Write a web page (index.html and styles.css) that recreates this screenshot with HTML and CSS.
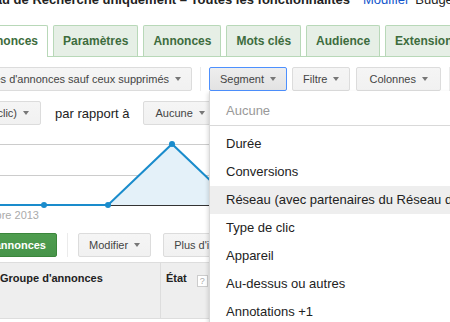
FILE: index.html
```html
<!DOCTYPE html>
<html lang="fr">
<head>
  <meta charset="UTF-8">
  <title>Groupes d'annonces</title>
  <link rel="stylesheet" href="styles.css">
</head>
<body>
  <div class="page">
    <div class="title">
      <div class="title-main"><span>Type : Réseau de Recherche uniquement – Toutes les fonctionnalités</span></div>
      <a href="#" class="link">Modifier</a>
      <span class="budget">Budget : 10,00 €/jour</span>
    </div>

    <div class="tabs">
      <div class="lead tab-lead"><span class="tab active">Groupes d'annonces</span></div>
      <span class="tab">Paramètres</span>
      <span class="tab">Annonces</span>
      <span class="tab">Mots clés</span>
      <span class="tab">Audience</span>
      <span class="tab">Extensions d'annonces</span>
    </div>

    <div class="toolbar toolbar-view">
      <div class="lead lead-status"><span class="btn">Tous les groupes d'annonces sauf ceux supprimés <i class="caret"></i></span></div>
      <span class="sep"></span>
      <span class="btn pressed">Segment <i class="caret"></i></span>
      <span class="btn">Filtre <i class="caret"></i></span>
      <span class="btn btn-wide">Colonnes <i class="caret"></i></span>
      <span class="sep"></span>
    </div>

    <div class="toolbar">
      <div class="lead lead-metric"><span class="btn">CPC moy. (coût par clic) <i class="caret"></i></span></div>
      <span class="compare">par rapport à</span>
      <span class="btn">Aucune <i class="caret"></i></span>
    </div>

    <svg class="chart" width="450" height="100" viewBox="0 0 450 100">
      <line x1="0" y1="19.5" x2="260" y2="19.5" stroke="#cccccc"/>
      <line x1="0" y1="50.5" x2="260" y2="50.5" stroke="#cccccc"/>
      <polygon points="108,80 172,19 236,80" fill="#e4f1f9"/>
      <line x1="0" y1="80.5" x2="260" y2="80.5" stroke="#333333"/>
      <polyline points="0,80 44,80 108,80 172,19 236,80" fill="none" stroke="#1a8ccc" stroke-width="2"/>
      <circle cx="44" cy="80" r="3" fill="#1a8ccc"/>
      <circle cx="108" cy="80" r="3" fill="#1a8ccc"/>
      <circle cx="172" cy="19" r="3" fill="#1a8ccc"/>
      <circle cx="236" cy="80" r="3" fill="#1a8ccc"/>
      <text x="39" y="94" text-anchor="end" font-size="11" fill="#aaaaaa">novembre 2013</text>
    </svg>

    <div class="toolbar toolbar-actions">
      <div class="lead lead-add"><span class="btn primary">+ Groupe d'annonces</span></div>
      <span class="sep"></span>
      <span class="btn">Modifier <i class="caret"></i></span>
      <span class="btn">Plus d'informations <i class="caret"></i></span>
    </div>

    <div class="grid-head">
      <div class="cell cell-name">Groupe d'annonces</div>
      <div class="cell cell-state">État <span class="help">?</span></div>
      <div class="cell">Clics</div>
    </div>

    <div class="menu">
      <div class="menu-item disabled">Aucune</div>
      <div class="menu-sep"></div>
      <div class="menu-item">Durée</div>
      <div class="menu-item">Conversions</div>
      <div class="menu-item hover">Réseau (avec partenaires du Réseau de Recherche)</div>
      <div class="menu-item">Type de clic</div>
      <div class="menu-item">Appareil</div>
      <div class="menu-item">Au-dessus ou autres</div>
      <div class="menu-item">Annotations +1</div>
    </div>
  </div>
</body>
</html>
```

FILE: styles.css
```css
body {
  margin: 0;
  font-family: "Liberation Sans", Arial, sans-serif;
  color: #222;
  background: #fff;
}
.page {
  position: relative;
  width: 450px;
  height: 322px;
  overflow: hidden;
}

/* items wider than their slot spill off the left edge */
.lead {
  flex: none;
  display: flex;
  justify-content: flex-end;
}

.title {
  display: flex;
  align-items: center;
  height: 15px;
  margin-top: -8px;
  font-size: 13px;
  line-height: 15px;
  white-space: nowrap;
}
.title-main {
  flex: none;
  width: 350px;
  display: flex;
  justify-content: flex-end;
  font-weight: bold;
}
.title .link {
  margin-left: 13px;
  color: #15c;
  text-decoration: none;
}
.budget { margin-left: 6px; }

.tabs {
  display: flex;
  align-items: flex-start;
  gap: 5px;
  height: 31px;
  margin-top: 18px;
  border-bottom: 1px solid #b8d8b8;
  white-space: nowrap;
}
.tab-lead { width: 48px; }
.tab {
  flex: none;
  box-sizing: border-box;
  height: 31px;
  padding: 0 9px;
  line-height: 30px;
  font-size: 12px;
  font-weight: bold;
  color: #3d6c3d;
  background: #e6efe6;
  border: 1px solid #b8d8b8;
  border-bottom: none;
  border-radius: 2px 2px 0 0;
}
.tab.active {
  height: 32px;
  background: #fff;
}

.toolbar {
  display: flex;
  align-items: center;
  height: 24px;
  margin-top: 10px;
  white-space: nowrap;
}
.lead-status { width: 192px; }
.lead-metric { width: 41px; }
.lead-add { width: 57px; }
.btn {
  flex: none;
  box-sizing: border-box;
  display: flex;
  align-items: center;
  height: 24px;
  padding: 0 11px;
  font-size: 11px;
  color: #444;
  background: linear-gradient(#f5f5f5, #f1f1f1);
  border: 1px solid #dcdcdc;
  border-radius: 2px;
}
.btn + .btn { margin-left: 5px; }
.toolbar-view .btn { padding: 0 10px; }
.toolbar-view .btn-wide {
  margin-left: 6px;
  padding: 0 12px;
}
.btn .caret {
  margin-left: 6px;
  border-top: 4px solid #777;
  border-left: 3px solid transparent;
  border-right: 3px solid transparent;
}
.btn.pressed {
  background: linear-gradient(#eeeeee, #e3e3e3);
  border-color: #4d90fe;
}
.btn.primary {
  color: #fff;
  font-weight: bold;
  background: linear-gradient(#4f9d4f, #47944a);
  border-color: #3b863b;
}
.sep {
  flex: none;
  width: 1px;
  height: 24px;
  margin: 0 8px;
  background: #ebebeb;
}
.compare {
  margin: 0 14px;
  font-size: 13px;
}

.chart { display: block; }

.toolbar-actions { margin-top: 8px; }
.toolbar-actions .sep { margin: 0 10px; }
.toolbar-actions .btn { padding: 0 10px; }
.toolbar-actions .btn + .btn { margin-left: 12px; }

.grid-head {
  display: flex;
  box-sizing: border-box;
  height: 57px;
  margin: 5px 0 0 -10px;
  font-size: 11px;
  font-weight: bold;
  background: #eee;
  border-top: 1px solid #ddd;
  border-bottom: 1px solid #ddd;
}
.cell {
  flex: none;
  box-sizing: border-box;
  padding: 9px 10px;
  border-right: 1px solid #ddd;
}
.cell-name { width: 171px; }
.cell-state {
  width: 90px;
  padding-left: 5px;
}
.help {
  display: inline-block;
  box-sizing: border-box;
  width: 11px;
  height: 12px;
  margin-left: 7px;
  font-size: 9px;
  line-height: 10px;
  font-weight: normal;
  text-align: center;
  color: #aaa;
  background: #fff;
  border: 1px solid #ccc;
  vertical-align: -2px;
}

.menu {
  position: absolute;
  left: 209px;
  top: 91px;
  width: 300px;
  height: 260px;
  padding-top: 6px;
  font-size: 13px;
  background: #fff;
  border-left: 1px solid #d9d9d9;
  box-shadow: -1px 2px 4px rgba(0,0,0,0.15);
}
.menu-item {
  height: 28px;
  padding-left: 16px;
  line-height: 28px;
  white-space: nowrap;
}
.menu-item.disabled { color: #999; }
.menu-item.hover { background: #eee; }
.menu-sep {
  height: 1px;
  margin-bottom: 4px;
  background: #d9d9d9;
}
```
